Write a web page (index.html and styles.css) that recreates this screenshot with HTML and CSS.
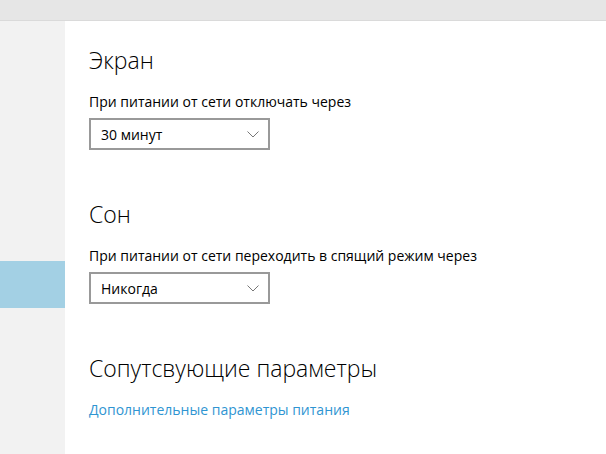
FILE: index.html
```html
<!DOCTYPE html>
<html lang="ru">
<head>
    <meta charset="UTF-8">
    <title>Питание и спящий режим</title>
    <link rel="stylesheet" href="styles.css">
</head>
<body>

<div id="titlebar"></div>

<div id="window">
    <div id="sidebar">
        <div class="nav-item selected"></div>
    </div>

    <div id="content">
        <div class="section">
            <h2>Экран</h2>
            <div class="label">При питании от сети отключать через</div>
            <div class="select">
                <span>30 минут</span>
                <svg class="chevron" width="12" height="7" viewBox="0 0 12 7">
                    <path d="M0.5 0.5 L6 6 L11.5 0.5" fill="none" stroke="#777" stroke-width="1"/>
                </svg>
            </div>
        </div>

        <div class="section">
            <h2>Сон</h2>
            <div class="label">При питании от сети переходить в спящий режим через</div>
            <div class="select">
                <span>Никогда</span>
                <svg class="chevron" width="12" height="7" viewBox="0 0 12 7">
                    <path d="M0.5 0.5 L6 6 L11.5 0.5" fill="none" stroke="#777" stroke-width="1"/>
                </svg>
            </div>
        </div>

        <div class="section">
            <h2>Сопутсвующие параметры</h2>
            <a class="link" href="#">Дополнительные параметры питания</a>
        </div>
    </div>
</div>

</body>
</html>
```

FILE: styles.css
```css
body {
    margin: 0;
    padding: 0;
    height: 100vh;
    display: flex;
    flex-direction: column;
    font-family: "Open Sans", "Noto Sans", sans-serif;
    color: #000;
    background-color: #fff;
    overflow: hidden;
}

#titlebar {
    height: 20px;
    background-color: #e6e6e6;
    border-bottom: 1px solid #dadada;
}

#window {
    flex: 1;
    display: flex;
}

#sidebar {
    width: 65px;
    background-color: #f2f2f2;
    padding-top: 240px;
}

.nav-item {
    height: 47px;
}

.nav-item.selected {
    background-color: #a3d0e4;
}

#content {
    flex: 1;
    padding: 25px 0 0 24px;
    display: flex;
    flex-direction: column;
    gap: 50px;
}

h2 {
    font-size: 23px;
    font-weight: 300;
    margin: 0 0 18px 0;
    line-height: 28px;
}

.label {
    font-size: 14px;
    line-height: 20px;
    margin-bottom: 6px;
}

.select {
    width: 158px;
    height: 28px;
    border: 2px solid #999;
    display: flex;
    align-items: center;
    justify-content: space-between;
    padding: 0 9px 0 10px;
    font-size: 14px;
}

.chevron {
    display: block;
}

.link {
    display: block;
    font-size: 14px;
    line-height: 20px;
    color: #2f95d2;
    text-decoration: none;
}
```
